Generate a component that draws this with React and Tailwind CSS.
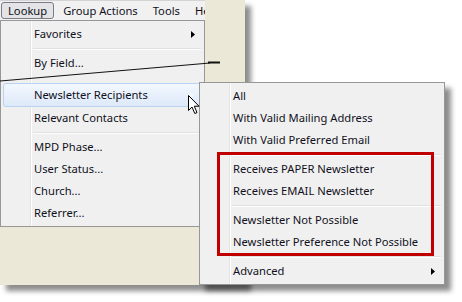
import React from 'react';

const Arrow = ({ light = false }) => (
  <svg width="4" height="7" viewBox="0 0 4 7" className="block">
    <polygon points="0,0 4,3.5 0,7" fill={light ? '#f8f8f8' : '#000'} />
  </svg>
);

const Sep = () => (
  <div className="h-[7px] flex flex-col justify-center pl-[30px] pr-[1px]">
    <div className="h-px bg-[#e0e0e0]" />
    <div className="h-px bg-white" />
  </div>
);

const Item = ({ label, sub = false, hot = false, h = 'h-[22px]' }) => (
  <div
    className={
      'flex items-center pr-[7px] ' +
      h +
      (hot
        ? ' rounded-[3px] border border-[#b8d2f2] bg-gradient-to-b from-[#f3f8fe] to-[#dde9f9] pl-[30px]'
        : ' pl-[31px]')
    }
  >
    <span className="flex-1 whitespace-nowrap">{label}</span>
    {sub && <Arrow light={hot} />}
  </div>
);

const Menu = ({ className, children }) => (
  <div
    className={
      'absolute border border-[#979797] bg-[#f0f0f0] py-[2px] px-[2px] text-[#10101c] ' + className
    }
  >
    {/* icon gutter */}
    <div className="absolute left-[29px] top-0 bottom-0 w-[2px] flex">
      <div className="w-px bg-[#e2e3e3]" />
      <div className="w-px bg-white" />
    </div>
    <div className="relative">{children}</div>
  </div>
);

export default function App() {
  return (
    <div className="relative w-[462px] h-[302px] bg-white overflow-hidden font-['Noto_Sans',sans-serif] text-[11.2px] leading-none">
      {/* window */}
      <div className="w-[245px] h-[285px] bg-[#ece8d8] shadow-[6px_6px_5px_rgba(0,0,0,0.45)]">
        {/* menu bar */}
        <div className="flex items-center h-[20px] w-[205px] bg-[#f1f1f1] border-t border-[#d4d4d4] overflow-hidden text-[#10101c]">
          <div className="ml-[1px] h-[17px] px-[6px] flex items-center rounded-[3px] border border-[#7c7c88] bg-[#e4e4e6]">
            Lookup
          </div>
          <div className="ml-[9px] whitespace-nowrap">Group Actions</div>
          <div className="ml-[15px]">Tools</div>
          <div className="ml-[15px] w-[12px] overflow-hidden whitespace-nowrap">He</div>
        </div>
      </div>

      {/* Lookup dropdown */}
      <Menu className="left-0 top-[20px] w-[205px]">
        <Item label="Favorites" sub />
        <Sep />
        <Item label="By Field..." />
        <div className="h-[9px]" />
        <Item label="Newsletter Recipients" sub hot h="h-[24px]" />
        <Item label="Relevant Contacts" />
        <Sep />
        <Item label="MPD Phase..." />
        <Item label="User Status..." />
        <Item label="Church..." />
        <Item label="Referrer..." />
      </Menu>

      {/* cut marker line */}
      <svg className="absolute left-0 top-[60px]" width="222" height="24">
        <line x1="0" y1="21" x2="210" y2="3" stroke="#111" strokeWidth="1" />
        <rect x="208" y="1.5" width="12" height="2" fill="#111" />
      </svg>

      {/* Newsletter submenu */}
      <Menu className="left-[199px] top-[82px] w-[246px] shadow-[6px_6px_5px_rgba(0,0,0,0.45)]">
        <Item label="All" />
        <Item label="With Valid Mailing Address" />
        <Item label="With Valid Preferred Email" />
        <Sep />
        <Item label="Receives PAPER Newsletter" />
        <Item label="Receives EMAIL Newsletter" />
        <Sep />
        <Item label="Newsletter Not Possible" />
        <Item label="Newsletter Preference Not Possible" />
        <Sep />
        <Item label="Advanced" sub />
      </Menu>

      {/* highlight box */}
      <div className="absolute left-[217px] top-[152px] w-[217px] h-[104px] border-[3px] border-[#c00000]" />

      {/* mouse cursor */}
      <svg className="absolute left-[188px] top-[95px]" width="13" height="20" viewBox="0 0 13 20">
        <polygon
          points="0.5,0.5 0.5,15.5 4,12 6.8,18.5 9,17.6 6.3,11.2 11,11.2"
          fill="#fff"
          stroke="#000"
          strokeWidth="1"
          strokeLinejoin="miter"
        />
      </svg>
    </div>
  );
}
